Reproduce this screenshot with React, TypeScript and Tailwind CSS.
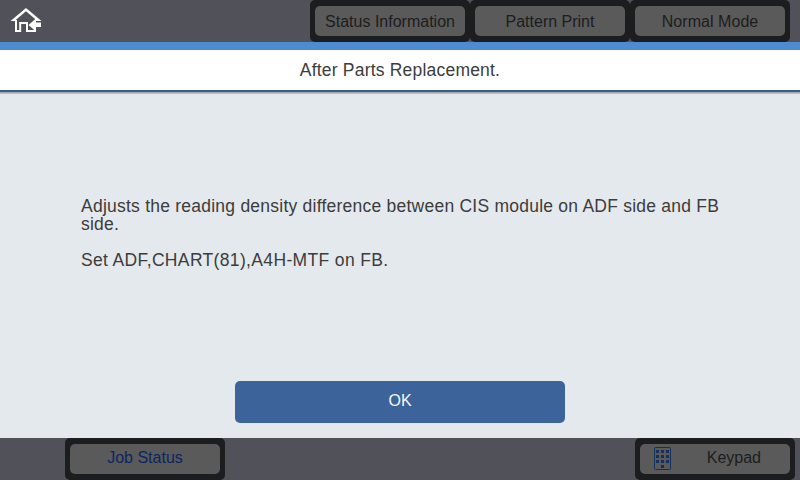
import type { ReactNode } from "react";

function HomeIcon() {
  return (
    <svg width="33" height="25" viewBox="0 0 33 25" fill="none">
      <path d="M16 0 31.5 13H26V11.8L16 3.2 6 11.8V13H0.5Z" fill="#fff" />
      <path d="M6 12V23H10.2V15H17V23H25V20" stroke="#fff" strokeWidth="2" />
      <path d="M18.5 17 26 10.5V14.5H31V19H26V23.5Z" fill="#fff" />
    </svg>
  );
}

function KeypadIcon() {
  const keys = [3, 8, 13].flatMap(y => [2, 7, 12].map(x => ({ x, y })));

  return (
    <svg width="17" height="24" viewBox="0 0 17 24" fill="none">
      <rect x="0.5" y="0.5" width="16" height="22" rx="1" stroke="#14305c" />
      {keys.map(({ x, y }) => (
        <rect key={`${x}-${y}`} x={x} y={y} width="3" height="3" fill="#14305c" />
      ))}
      <rect x="7" y="18" width="3" height="3" fill="#14305c" />
    </svg>
  );
}

function BarButton({ children, className = "" }: { children: ReactNode; className?: string }) {
  return (
    <div className="w-40 h-[42px] px-[5px] py-1.5 rounded-[5px] bg-[#1c1d1f]">
      <button
        type="button"
        className={`w-full h-[30px] flex items-center justify-center rounded-[5px] bg-[#5a5a5a] text-[16px] leading-[18px] whitespace-nowrap ${className}`}
      >
        {children}
      </button>
    </div>
  );
}

export default function App() {
  return (
    <div className="w-[800px] h-[480px] flex flex-col overflow-hidden bg-[#e4e9ed] font-['Liberation_Sans',Arial,sans-serif] text-[#3c3c3c]">
      {/* Top bar */}
      <header className="h-[42px] shrink-0 flex items-start justify-between pl-2.5 pr-2.5 bg-[#515159]">
        <div className="pt-2">
          <HomeIcon />
        </div>
        <nav className="flex">
          <BarButton className="pt-0.5 text-[#1d1d1d]">Status Information</BarButton>
          <BarButton className="pt-0.5 text-[#1d1d1d]">Pattern Print</BarButton>
          <BarButton className="pt-0.5 text-[#1d1d1d] tracking-[0.05px]">Normal Mode</BarButton>
        </nav>
      </header>

      {/* Title */}
      <div className="h-2 shrink-0 bg-[#4f8bd2]" />
      <h1 className="h-[42px] shrink-0 flex items-center justify-center border-b-2 border-[#30608f] bg-white text-[17.5px] tracking-[0.2px]">
        After Parts Replacement.
      </h1>
      <div className="h-0.5 shrink-0 bg-linear-to-b from-[#9d9d9b] to-[#c6c9cb]" />

      {/* Message */}
      <main className="flex-1 flex flex-col items-center justify-between pt-[103px] pb-[15px]">
        <div className="w-[640px] pl-px text-[17.5px] leading-[18px]">
          <p className="whitespace-nowrap tracking-[0.235px]">
            Adjusts the reading density difference between CIS module on ADF side and FB
            <br />
            side.
          </p>
          <p className="mt-[18px] tracking-[0.35px]">Set ADF,CHART(81),A4H-MTF on FB.</p>
        </div>
        <button
          type="button"
          className="w-[330px] h-[42px] pb-0.5 rounded-[5px] bg-[#3c649a] text-[16px] text-[#f4f7fb]"
        >
          OK
        </button>
      </main>

      {/* Bottom bar */}
      <footer className="h-[42px] shrink-0 flex justify-between pl-[65px] pr-[5px] bg-[#515159]">
        <BarButton className="pb-0.5 text-[#0c2563]">Job Status</BarButton>
        <BarButton className="text-[#1d1d1d]">
          <span className="w-full flex items-center justify-between pl-3.5 pr-[29px]">
            <KeypadIcon />
            <span className="pb-0.5">Keypad</span>
          </span>
        </BarButton>
      </footer>
    </div>
  );
}
